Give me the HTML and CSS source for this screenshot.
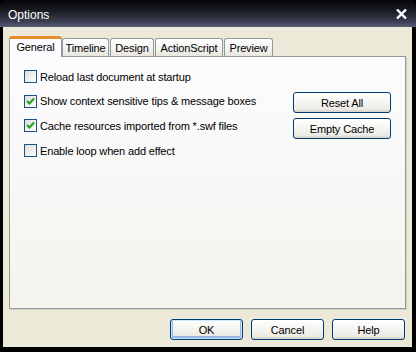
FILE: index.html
```html
<!DOCTYPE html>
<html lang="en">
<head>
  <meta charset="UTF-8" />
  <title>Options</title>
  <link rel="stylesheet" href="styles.css">
</head>
<body>
  <div class="window">
    <div class="titlebar">
      <span class="title">Options</span>
      <svg class="close" width="11" height="10" viewBox="0 0 11 10">
        <path d="M1 0.5 L10 9.5 M10 0.5 L1 9.5" stroke="#fff" stroke-width="2.4" fill="none"/>
      </svg>
    </div>
    <div class="client">
      <div class="tabs">
        <div class="tab active">General</div>
        <div class="tab tab-timeline">Timeline</div>
        <div class="tab tab-design">Design</div>
        <div class="tab tab-as">ActionScript</div>
        <div class="tab tab-preview">Preview</div>
      </div>
      <div class="panel">
        <div class="options">
          <label class="option"><span class="box"></span>Reload last document at startup</label>
          <label class="option"><span class="box checked"><svg width="11" height="11" viewBox="0 0 11 11"><path d="M2 5 L4.5 7.5 L9 2.5" stroke="#21a121" stroke-width="2" fill="none"/></svg></span>Show context sensitive tips &amp; message boxes</label>
          <label class="option"><span class="box checked"><svg width="11" height="11" viewBox="0 0 11 11"><path d="M2 5 L4.5 7.5 L9 2.5" stroke="#21a121" stroke-width="2" fill="none"/></svg></span>Cache resources imported from *.swf files</label>
          <label class="option"><span class="box"></span>Enable loop when add effect</label>
        </div>
        <div class="side-buttons">
          <button class="btn wide">Reset All</button>
          <button class="btn wide">Empty Cache</button>
        </div>
      </div>
      <div class="footer">
        <button class="btn default">OK</button>
        <button class="btn">Cancel</button>
        <button class="btn">Help</button>
      </div>
    </div>
  </div>
</body>
</html>
```

FILE: styles.css
```css
body {
  margin: 0;
  background: #000;
  font-family: 'Liberation Sans', Arial, sans-serif;
  font-size: 11px;
  letter-spacing: -0.15px;
  color: #000;
}

.window {
  width: 416px;
  height: 352px;
  background: #000;
  display: flex;
  flex-direction: column;
  border-radius: 6px 6px 0 0;
  overflow: hidden;
}

.titlebar {
  height: 27px;
  display: flex;
  align-items: center;
  justify-content: space-between;
  padding: 0 9px 0 8px;
  background: linear-gradient(to bottom, #060608 0%, #1a1c24 40%, #3a3f52 80%, #565c76 100%);
  box-sizing: border-box;
}

.title {
  color: #fff;
  font-size: 12px;
  letter-spacing: 0;
  margin-top: 2px;
}

.close {
  margin-top: 1px;
}

.client {
  flex: 1;
  margin: 0 4px 0 3px;
  background: #ece9d8;
  padding: 9px 7px 0 6px;
  display: flex;
  flex-direction: column;
  border-bottom: 5px solid #000;
}

.tabs {
  display: flex;
  align-items: flex-end;
  height: 20px;
  position: relative;
  z-index: 1;
}

.tab {
  height: 18px;
  box-sizing: border-box;
  border: 1px solid #919b9c;
  border-bottom: none;
  border-radius: 3px 3px 0 0;
  background: linear-gradient(to bottom, #ffffff, #f3f3ef 60%, #e8e6dc);
  display: flex;
  align-items: center;
  justify-content: center;
  padding-top: 1px;
  margin-right: 1px;
}

.tab.active {
  height: 21px;
  width: 53px;
  margin-bottom: -1px;
  margin-right: 0;
  border-top: 3px solid #ffc83c;
  border-color: #e68b2c #919b9c transparent #919b9c;
  background: #fcfcfe;
  padding-top: 0;
  padding-bottom: 3px;
}

.tab-timeline { width: 47px; }
.tab-design { width: 44px; }
.tab-as { width: 68px; }
.tab-preview { width: 49px; }

.panel {
  height: 253px;
  width: 397px;
  box-sizing: border-box;
  border: 1px solid #919b9c;
  box-shadow: 1px 1px 0 #d0d0bf;
  background: linear-gradient(to bottom, #fcfcfe, #f4f3ee);
  padding: 13px 14px 0 14px;
  display: flex;
  justify-content: space-between;
}

.options {
  display: flex;
  flex-direction: column;
}

.option {
  display: flex;
  align-items: center;
  height: 13px;
  margin-bottom: 11.7px;
  white-space: nowrap;
}

.box {
  width: 13px;
  height: 13px;
  box-sizing: border-box;
  border: 1px solid #1c5180;
  background: linear-gradient(135deg, #dcdcd7, #ffffff);
  margin-right: 3px;
  display: flex;
  align-items: center;
  justify-content: center;
  flex-shrink: 0;
}

.side-buttons {
  display: flex;
  flex-direction: column;
  gap: 5px;
  margin-top: 22px;
}

.btn {
  width: 73px;
  height: 21px;
  box-sizing: border-box;
  border: 1px solid #003c74;
  border-radius: 3px;
  background: linear-gradient(to bottom, #ffffff 0%, #f4f4f0 50%, #ecebe6 85%, #d6d0c5 100%);
  font-family: 'Liberation Sans', Arial, sans-serif;
  font-size: 11px;
  letter-spacing: -0.15px;
  color: #000;
  padding: 0;
}

.btn.wide {
  width: 98px;
}

.btn.default {
  box-shadow: inset 0 0 0 1px #cee7ff, inset 0 -1px 0 2px #98b8ea;
}

.footer {
  display: flex;
  justify-content: flex-end;
  gap: 8px;
  margin-top: 10px;
}
```
